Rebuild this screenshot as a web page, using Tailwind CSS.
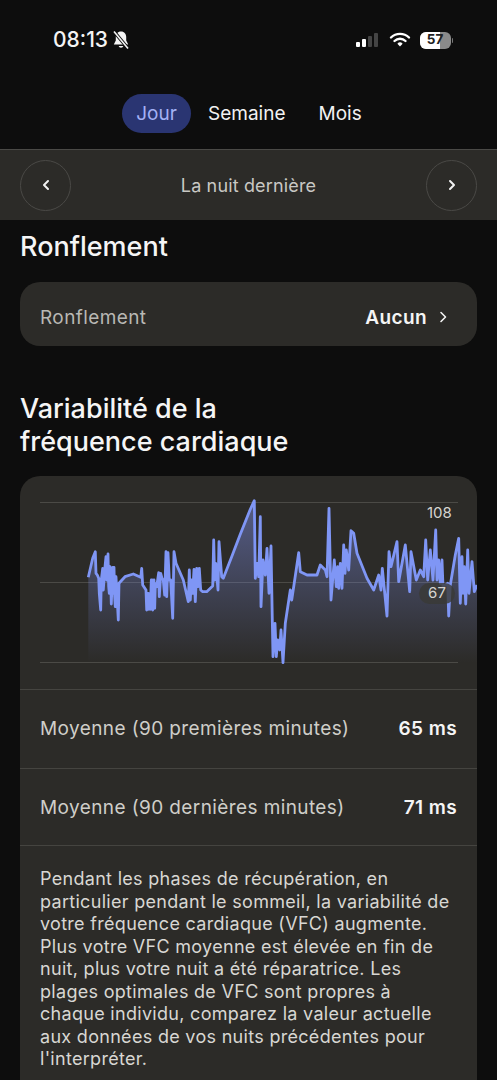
<!DOCTYPE html>
<html lang="fr">
<head>
    <meta charset="UTF-8">
    <meta name="viewport" content="width=device-width, initial-scale=1.0">
    <title>Sommeil</title>
    <script src="https://cdn.jsdelivr.net/npm/@tailwindcss/browser@4"></script>
</head>
<body class="h-[1080px] overflow-hidden bg-[#0d0d0d] text-white font-['Inter','Liberation_Sans',sans-serif]">
    <!-- Status bar -->
    <div class="h-[94px] pt-[27px] pl-[53px] pr-[44px] flex justify-between items-start">
        <div class="flex items-center h-[26px] gap-[4px]">
            <span class="text-[21px] font-medium text-[#f4f4f4]">08:13</span>
            <svg width="18" height="20" viewBox="0 0 18 20">
                <path d="M9 1.500c-3.400 0-5.200 2.500-5.200 5.600v3.400L1.800 14.500h14.400l-2-4V7.100c0-3.100-1.800-5.600-5.200-5.600z" fill="#f4f4f4"/>
                <path d="M6.600 16a2.500 2.500 0 0 0 4.800 0z" fill="#f4f4f4"/>
                <path d="M2 1.500l14 17" stroke="#0d0d0d" stroke-width="3.500"/>
                <path d="M2 1.500l14 17" stroke="#f4f4f4" stroke-width="1.600"/>
            </svg>
        </div>
        <div class="flex items-center h-[26px] gap-[9px]">
            <svg width="25" height="16" viewBox="0 0 25 16">
                <rect x="1" y="10" width="4" height="5" rx="1" fill="#fff"/>
                <rect x="7" y="7" width="4" height="8" rx="1" fill="#fff"/>
                <rect x="13" y="4" width="4" height="11" rx="1" fill="#444"/>
                <rect x="19" y="1" width="4" height="14" rx="1" fill="#444"/>
            </svg>
            <svg width="22" height="16" viewBox="0 0 22 16" fill="none" stroke="#fff" stroke-width="2.400" stroke-linecap="round">
                <path d="M2 5.500a13 13 0 0 1 18 0"/>
                <path d="M5.500 9a8 8 0 0 1 11 0"/>
                <path d="M11 14.500l-2.600-2.800a3.600 3.600 0 0 1 5.200 0z" fill="#fff" stroke="none"/>
            </svg>
            <div class="flex items-center gap-[1px]">
                <div class="relative w-[31px] h-[17px] rounded-[6px] overflow-hidden bg-[#8a8a8a]">
                    <div class="absolute left-0 top-0 bottom-0 w-[20px] bg-white"></div>
                    <span class="absolute inset-0 flex items-center justify-center text-[13.500px] leading-none font-bold text-[#222]">57</span>
                </div>
                <div class="w-[1.500px] h-[5px] rounded-r-full bg-[#777]"></div>
            </div>
        </div>
    </div>

    <!-- Period tabs -->
    <div class="h-[55px] pl-[122px] flex items-start text-[19px]">
        <div class="w-[69px] h-[39px] pt-[1px] rounded-full bg-[#2a3572] text-[#a3b1f5] flex items-center justify-center">Jour</div>
        <div class="ml-[17px] h-[39px] pt-[1px] flex items-center text-[#f2f2f2]">Semaine</div>
        <div class="ml-[33px] h-[39px] pt-[1px] flex items-center text-[#f2f2f2]">Mois</div>
    </div>

    <!-- Date nav -->
    <div class="h-[71px] bg-[#2c2b28] border-t border-[#4a4946] px-[20px] flex items-center justify-between">
        <div class="w-[51px] h-[51px] rounded-full border border-[#4a4946] flex items-center justify-center">
            <svg width="10" height="12" viewBox="0 0 10 12" fill="none" stroke="#f2f2f2" stroke-width="2" stroke-linecap="round" stroke-linejoin="round"><path d="M7 2L3 6l4 4"/></svg>
        </div>
        <span class="mt-[1px] text-[18px] tracking-[0.15px] text-[#c9c8c4]">La nuit dernière</span>
        <div class="w-[51px] h-[51px] rounded-full border border-[#4a4946] flex items-center justify-center">
            <svg width="10" height="12" viewBox="0 0 10 12" fill="none" stroke="#f2f2f2" stroke-width="2" stroke-linecap="round" stroke-linejoin="round"><path d="M3 2l4 4-4 4"/></svg>
        </div>
    </div>

    <main class="px-[20px]">
        <h2 class="mt-[9px] text-[27px] leading-[36px] font-medium text-[#f5f5f5]">Ronflement</h2>

        <div class="mt-[17px] h-[64px] rounded-[20px] bg-[#2c2b28] pl-[20px] pr-[29px] pt-[8px] flex items-center justify-between text-[19px] tracking-[0.4px]">
            <span class="text-[#b9b8b4]">Ronflement</span>
            <div class="flex items-center gap-[12px]">
                <span class="font-semibold text-[#f5f5f5]">Aucun</span>
                <svg class="-mt-[3px]" width="9" height="12" viewBox="0 0 9 12" fill="none" stroke="#f2f2f2" stroke-width="1.600" stroke-linecap="round" stroke-linejoin="round"><path d="M2 1.500L6.500 6 2 10.500"/></svg>
            </div>
        </div>

        <h2 class="mt-[46px] text-[27px] leading-[33px] font-medium text-[#f5f5f5]">Variabilité de la<br>fréquence cardiaque</h2>

        <div class="mt-[18px] rounded-t-[20px] bg-[#2c2b28] h-[620px] overflow-hidden">
            <!-- Chart, drawn in page coordinates -->
            <div class="relative h-[213px]">
                <svg class="absolute inset-0" width="457" height="213" viewBox="20 476 457 213">
                    <defs>
                        <linearGradient id="hrvFill" x1="0" y1="0" x2="0" y2="1">
                            <stop offset="0" stop-color="#7f8fe8" stop-opacity="0.5"/>
                            <stop offset="1" stop-color="#7f8fe8" stop-opacity="0"/>
                        </linearGradient>
                    </defs>
                    <path d="M40 502.500H458M40 582.500H458M40 662.500H458" stroke="#4b4a46" stroke-width="1" fill="none"/>
                    <path id="hrvArea" fill="url(#hrvFill)"/>
                    <path id="hrvLine" fill="none" stroke="#7f96f5" stroke-width="2.800" stroke-linejoin="round"/>
                </svg>
                <span class="absolute left-[407px] top-[28px] text-[15px] leading-[18px] text-[#d6d5d1]">108</span>
                <span class="absolute left-[399px] top-[107px] w-[36px] h-[21px] rounded-full bg-[#3a3936]/80 flex items-center justify-center text-[15px] text-[#d6d5d1]">67</span>
            </div>

            <div class="border-t border-[#454440] h-[79px] px-[20px] flex items-center justify-between text-[19px] tracking-[0.4px]">
                <span class="text-[#cfcec9]">Moyenne (90 premières minutes)</span>
                <span class="font-semibold text-[#f5f5f5]">65 ms</span>
            </div>
            <div class="border-t border-[#454440] h-[77px] pt-[2px] px-[20px] flex items-center justify-between text-[19px] tracking-[0.4px]">
                <span class="text-[#cfcec9]">Moyenne (90 dernières minutes)</span>
                <span class="font-semibold text-[#f5f5f5]">71 ms</span>
            </div>
            <p class="border-t border-[#454440] pl-[20px] pr-[10px] pt-[22px] text-[18px] tracking-[0.3px] leading-[22.500px] text-[#d8d7d3]">Pendant les phases de récupération, en<br>particulier pendant le sommeil, la variabilité de<br>votre fréquence cardiaque (VFC) augmente.<br>Plus votre VFC moyenne est élevée en fin de<br>nuit, plus votre nuit a été réparatrice. Les<br>plages optimales de VFC sont propres à<br>chaque individu, comparez la valeur actuelle<br>aux données de vos nuits précédentes pour<br>l'interpréter.</p>
        </div>
    </main>

    <script>
        const left = [205,292,218,235,226,215,228,280,232,285,236,295,238,340,242,390,244,300,248,265,250,330,254,270,258,230,260,300,264,222,266,320,268,340,270,260,272,300,274,372,278,262,280,340,282,262,284,350,286,380,288,290,290,330,295,420,297,310,315,290,340,282,362,292,365,265,368,315,378,330,380,390,382,340,385,340,386,388,390,340,391,388,394,300,396,300,398,390,402,300,404,385,406,310,410,320,416,278,418,350,422,280,426,295,430,300,434,345,438,215,440,350,444,218,448,300,452,300,458,415,462,215,468,250,490,300,505,365,508,270,511,360,514,300,518,340,522,268,526,365,530,265,534,320,538,265,542,330,548,335,560,335,578,318,581,180,584,300,587,250,594,330,597,185,605,290,610,295,635,230,660,165,690,90,703,62,706,295];
        const right = [0,250,5,290,10,110,12,380,18,240,25,285,30,205,36,340,42,198,46,420,48,530,54,430,58,530,62,480,68,510,72,450,78,548,85,430,100,330,104,360,110,320,125,218,130,275,150,285,180,285,190,255,205,270,210,290,216,85,222,360,232,240,238,320,242,260,245,325,250,250,255,325,260,195,264,280,268,210,275,270,282,152,290,160,300,220,330,295,350,330,365,285,372,330,376,265,390,408,396,215,402,260,420,185,425,305,445,195,458,335,462,215,478,300,490,270,500,290,506,180,512,300,520,210,528,300,536,150,540,300,545,240,550,310,555,240,558,320,572,310,575,408,580,315,595,225,605,175,610,370,615,230,618,340,622,260,626,372,632,210,636,340,640,300,645,245,652,335,660,315];
        const pts = [];
        for (let i = 0; i < left.length; i += 2) pts.push([20 + left[i] / 3, 480 + left[i + 1] / 3]);
        for (let i = 0; i < right.length; i += 2) pts.push([257 + right[i] / 3, 480 + right[i + 1] / 3]);
        const line = 'M' + pts.map(p => p[0].toFixed(1) + ' ' + p[1].toFixed(1)).join('L');
        document.getElementById('hrvLine').setAttribute('d', line);
        document.getElementById('hrvArea').setAttribute('d', line + 'L477 662L88.300 662Z');
    </script>
</body>
</html>
